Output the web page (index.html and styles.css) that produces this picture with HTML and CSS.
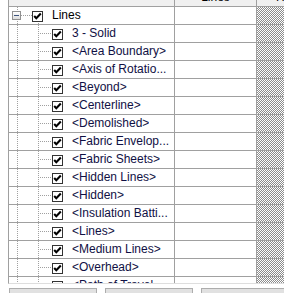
FILE: index.html
```html
<!DOCTYPE html>
<html lang="en">
<head>
  <meta charset="UTF-8">
  <title>Visibility/Graphic Overrides</title>
  <link rel="stylesheet" href="styles.css">
</head>
<body>
  <div class="dialog">
    <div class="grid">
      <div class="row head">
        <div class="cell tree"></div>
        <div class="cell value"><span class="head-text">Lines</span></div>
        <div class="cell hatch-head"><span class="head-text">Halftone</span></div>
      </div>

      <div class="row">
        <div class="cell tree cat">
          <span class="expander"><span class="minus"></span></span>
          <span class="link"></span>
          <span class="check"><svg width="9" height="9" viewBox="0 0 9 9"><polyline points="1.2,4 3.3,6.2 7.8,1.6" /></svg></span>
          <span class="label cat-label">Lines</span>
        </div>
        <div class="cell value"></div>
        <div class="cell hatch"></div>
      </div>

      <div class="row">
        <div class="cell tree sub">
          <span class="link"></span>
          <span class="check"><svg width="9" height="9" viewBox="0 0 9 9"><polyline points="1.2,4 3.3,6.2 7.8,1.6" /></svg></span>
          <span class="label">3 - Solid</span>
        </div>
        <div class="cell value"></div>
        <div class="cell hatch"></div>
      </div>

      <div class="row">
        <div class="cell tree sub">
          <span class="link"></span>
          <span class="check"><svg width="9" height="9" viewBox="0 0 9 9"><polyline points="1.2,4 3.3,6.2 7.8,1.6" /></svg></span>
          <span class="label">&lt;Area Boundary&gt;</span>
        </div>
        <div class="cell value"></div>
        <div class="cell hatch"></div>
      </div>

      <div class="row">
        <div class="cell tree sub">
          <span class="link"></span>
          <span class="check"><svg width="9" height="9" viewBox="0 0 9 9"><polyline points="1.2,4 3.3,6.2 7.8,1.6" /></svg></span>
          <span class="label">&lt;Axis of Rotatio...</span>
        </div>
        <div class="cell value"></div>
        <div class="cell hatch"></div>
      </div>

      <div class="row">
        <div class="cell tree sub">
          <span class="link"></span>
          <span class="check"><svg width="9" height="9" viewBox="0 0 9 9"><polyline points="1.2,4 3.3,6.2 7.8,1.6" /></svg></span>
          <span class="label">&lt;Beyond&gt;</span>
        </div>
        <div class="cell value"></div>
        <div class="cell hatch"></div>
      </div>

      <div class="row">
        <div class="cell tree sub">
          <span class="link"></span>
          <span class="check"><svg width="9" height="9" viewBox="0 0 9 9"><polyline points="1.2,4 3.3,6.2 7.8,1.6" /></svg></span>
          <span class="label">&lt;Centerline&gt;</span>
        </div>
        <div class="cell value"></div>
        <div class="cell hatch"></div>
      </div>

      <div class="row">
        <div class="cell tree sub">
          <span class="link"></span>
          <span class="check"><svg width="9" height="9" viewBox="0 0 9 9"><polyline points="1.2,4 3.3,6.2 7.8,1.6" /></svg></span>
          <span class="label">&lt;Demolished&gt;</span>
        </div>
        <div class="cell value"></div>
        <div class="cell hatch"></div>
      </div>

      <div class="row">
        <div class="cell tree sub">
          <span class="link"></span>
          <span class="check"><svg width="9" height="9" viewBox="0 0 9 9"><polyline points="1.2,4 3.3,6.2 7.8,1.6" /></svg></span>
          <span class="label">&lt;Fabric Envelop...</span>
        </div>
        <div class="cell value"></div>
        <div class="cell hatch"></div>
      </div>

      <div class="row">
        <div class="cell tree sub">
          <span class="link"></span>
          <span class="check"><svg width="9" height="9" viewBox="0 0 9 9"><polyline points="1.2,4 3.3,6.2 7.8,1.6" /></svg></span>
          <span class="label">&lt;Fabric Sheets&gt;</span>
        </div>
        <div class="cell value"></div>
        <div class="cell hatch"></div>
      </div>

      <div class="row">
        <div class="cell tree sub">
          <span class="link"></span>
          <span class="check"><svg width="9" height="9" viewBox="0 0 9 9"><polyline points="1.2,4 3.3,6.2 7.8,1.6" /></svg></span>
          <span class="label">&lt;Hidden Lines&gt;</span>
        </div>
        <div class="cell value"></div>
        <div class="cell hatch"></div>
      </div>

      <div class="row">
        <div class="cell tree sub">
          <span class="link"></span>
          <span class="check"><svg width="9" height="9" viewBox="0 0 9 9"><polyline points="1.2,4 3.3,6.2 7.8,1.6" /></svg></span>
          <span class="label">&lt;Hidden&gt;</span>
        </div>
        <div class="cell value"></div>
        <div class="cell hatch"></div>
      </div>

      <div class="row">
        <div class="cell tree sub">
          <span class="link"></span>
          <span class="check"><svg width="9" height="9" viewBox="0 0 9 9"><polyline points="1.2,4 3.3,6.2 7.8,1.6" /></svg></span>
          <span class="label">&lt;Insulation Batti...</span>
        </div>
        <div class="cell value"></div>
        <div class="cell hatch"></div>
      </div>

      <div class="row">
        <div class="cell tree sub">
          <span class="link"></span>
          <span class="check"><svg width="9" height="9" viewBox="0 0 9 9"><polyline points="1.2,4 3.3,6.2 7.8,1.6" /></svg></span>
          <span class="label">&lt;Lines&gt;</span>
        </div>
        <div class="cell value"></div>
        <div class="cell hatch"></div>
      </div>

      <div class="row">
        <div class="cell tree sub">
          <span class="link"></span>
          <span class="check"><svg width="9" height="9" viewBox="0 0 9 9"><polyline points="1.2,4 3.3,6.2 7.8,1.6" /></svg></span>
          <span class="label">&lt;Medium Lines&gt;</span>
        </div>
        <div class="cell value"></div>
        <div class="cell hatch"></div>
      </div>

      <div class="row">
        <div class="cell tree sub">
          <span class="link"></span>
          <span class="check"><svg width="9" height="9" viewBox="0 0 9 9"><polyline points="1.2,4 3.3,6.2 7.8,1.6" /></svg></span>
          <span class="label">&lt;Overhead&gt;</span>
        </div>
        <div class="cell value"></div>
        <div class="cell hatch"></div>
      </div>

      <div class="row">
        <div class="cell tree sub">
          <span class="link"></span>
          <span class="check"><svg width="9" height="9" viewBox="0 0 9 9"><polyline points="1.2,4 3.3,6.2 7.8,1.6" /></svg></span>
          <span class="label">&lt;Path of Travel...</span>
        </div>
        <div class="cell value"></div>
        <div class="cell hatch"></div>
      </div>
    </div>

    <div class="buttons">
      <button class="btn"></button>
      <button class="btn"></button>
      <button class="btn"></button>
    </div>
  </div>
</body>
</html>
```

FILE: styles.css
```css
body, html {
  margin: 0;
  padding: 0;
  background: #fff;
  overflow: hidden;
  font-family: "Liberation Sans", Arial, sans-serif;
  font-size: 12px;
}
.dialog {
  padding-left: 8px;
}
.grid {
  width: 360px;
  height: 283px;
  border-left: 1px solid #a0a0a0;
  border-bottom: 1px solid #dedede;
  overflow: hidden;
}
.row {
  display: flex;
  height: 17px;
  border-bottom: 1px solid #a0a0a0;
}
.cell {
  flex: none;
  box-sizing: border-box;
  overflow: hidden;
  white-space: nowrap;
}
.tree {
  width: 166px;
  border-right: 1px solid #a0a0a0;
  display: flex;
  align-items: center;
}
.value {
  width: 82px;
  border-right: 1px solid #a0a0a0;
}
.hatch {
  width: 100px;
  background: repeating-conic-gradient(#8c8c8c 0 25%, #fff 0 50%) 0 0 / 2px 2px;
}

/* header strip, mostly scrolled out of view */
.head {
  height: 6px;
  background: #f0f0f0;
}
.head .value {
  text-align: center;
}
.head-text {
  display: block;
  line-height: 14px;
  margin-top: -10px;
  color: #000;
}
.hatch-head {
  width: 100px;
  padding-left: 19px;
}

/* tree guide lines (dotted) */
.cat {
  padding-left: 3px;
  background-image: repeating-linear-gradient(#a0a0a0 0 1px, transparent 1px 2px),
                    repeating-linear-gradient(#a0a0a0 0 1px, transparent 1px 2px);
  background-size: 1px 100%, 1px 7px;
  background-position: 8px 0, 29px 10px;
  background-repeat: no-repeat;
}
.sub {
  padding-left: 31px;
  background-image: repeating-linear-gradient(#a0a0a0 0 1px, transparent 1px 2px),
                    repeating-linear-gradient(#a0a0a0 0 1px, transparent 1px 2px);
  background-size: 1px 100%, 1px 100%;
  background-position: 8px 0, 29px 0;
  background-repeat: no-repeat;
}
.link {
  flex: none;
  width: 11px;
  height: 1px;
  background: repeating-linear-gradient(to right, #a0a0a0 0 1px, transparent 1px 2px);
}
.sub .link {
  margin-right: 1px;
}

.expander {
  flex: none;
  box-sizing: border-box;
  width: 9px;
  height: 9px;
  border: 1px solid #919191;
  background: linear-gradient(#fff, #dcdcdc);
  display: flex;
  align-items: center;
  justify-content: center;
}
.minus {
  width: 5px;
  height: 1px;
  background: #3e557e;
}

.check {
  flex: none;
  box-sizing: border-box;
  width: 11px;
  height: 11px;
  margin-top: 1px;
  border: 1px solid #333;
  background: #fff;
  display: flex;
  align-items: center;
  justify-content: center;
}
.check svg {
  display: block;
}
.check polyline {
  fill: none;
  stroke: #000;
  stroke-width: 2.1;
}

.label {
  margin-left: 9px;
  line-height: 17px;
  color: #101044;
  overflow: hidden;
}
.cat-label {
  color: #000;
}

.buttons {
  display: flex;
  gap: 8px;
  margin-top: 4px;
  margin-left: 1px;
}
.btn {
  flex: none;
  width: 88px;
  height: 23px;
  padding: 0;
  border: 1px solid #adadad;
  background: #e1e1e1;
}
```
